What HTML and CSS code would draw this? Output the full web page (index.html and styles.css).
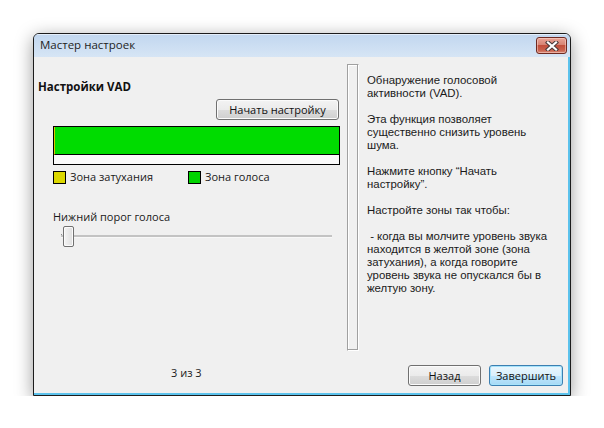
FILE: index.html
```html
<!DOCTYPE html>
<html lang="ru">
<head>
<meta charset="utf-8">
<title>Мастер настроек</title>
<link rel="stylesheet" href="styles.css">
</head>
<body>
<div class="desktop">
  <div class="window">
    <div class="titlebar">
      <span class="title">Мастер настроек</span>
      <button class="close" aria-label="Закрыть">
        <svg width="14" height="10" viewBox="0 0 14 10">
          <path d="M3 1.5 L11 8.5 M11 1.5 L3 8.5" stroke="#4a3a3a" stroke-width="4.2" stroke-linecap="square"/>
          <path d="M3 1.5 L11 8.5 M11 1.5 L3 8.5" stroke="#ffffff" stroke-width="2.2" stroke-linecap="square"/>
        </svg>
      </button>
    </div>
    <div class="client">
      <div class="main">
        <div class="left">
          <h1 class="heading">Настройки VAD</h1>
          <div class="btn-row">
            <button class="btn btn-start">Начать настройку</button>
          </div>
          <div class="meter">
            <div class="meter-level"></div>
            <div class="meter-bottom"></div>
          </div>
          <div class="legend">
            <div class="legend-item legend-first"><span class="swatch swatch-yellow"></span>Зона затухания</div>
            <div class="legend-item"><span class="swatch swatch-green"></span>Зона голоса</div>
          </div>
          <div class="slider-label">Нижний порог голоса</div>
          <div class="slider">
            <div class="tick"></div>
            <div class="track"></div>
            <div class="thumb"></div>
          </div>
        </div>
        <div class="separator"></div>
        <div class="help">
          <p>Обнаружение голосовой<br>активности (VAD).</p>
          <p>Эта функция позволяет<br>существенно снизить уровень<br>шума.</p>
          <p>Нажмите кнопку “Начать<br>настройку”.</p>
          <p>Настройте зоны так чтобы:</p>
          <p>&nbsp;- когда вы молчите уровень звука<br>находится в желтой зоне (зона<br>затухания), а когда говорите<br>уровень звука не опускался бы в<br>желтую зону.</p>
        </div>
      </div>
      <div class="footer">
        <span class="pages">3 из 3</span>
        <div class="footer-buttons">
          <button class="btn btn-back">Назад</button>
          <button class="btn btn-default">Завершить</button>
        </div>
      </div>
    </div>
  </div>
</div>
</body>
</html>
```
FILE: styles.css
```css
html, body {
  margin: 0;
  padding: 0;
  background: #ffffff;
}
body {
  font-family: "Open Sans", "Noto Sans", sans-serif;
  font-size: 11px;
  color: #1a1a1a;
}
.desktop {
  padding: 33px 0 0 33px;
}
.window {
  box-sizing: border-box;
  width: 538px;
  height: 363px;
  border: 1px solid #1c1c1c;
  border-radius: 6px 6px 0 0;
  background: #bcd3ee;
  box-shadow: 0 4px 18px rgba(0, 0, 0, 0.4);
  display: flex;
  flex-direction: column;
  overflow: hidden;
}
.titlebar {
  height: 23px;
  flex: none;
  display: flex;
  align-items: flex-start;
  justify-content: space-between;
  background: linear-gradient(#c2d7ef, #d6e5f5);
  border-top: 1px solid #e4eefa;
  box-sizing: border-box;
}
.title {
  font-size: 11.5px;
  line-height: 20px;
  padding-left: 6px;
  color: #1e1e1e;
}
.close {
  box-sizing: border-box;
  width: 31px;
  height: 17px;
  margin: 2px 3px 0 0;
  padding: 0;
  border: 1px solid #6e2a22;
  border-radius: 3px;
  background: linear-gradient(#e9a497 0%, #d78474 45%, #c24f3c 50%, #c9604c 80%, #d88a78 100%);
  box-shadow: inset 0 0 0 1px rgba(255, 220, 210, 0.5);
  display: flex;
  align-items: center;
  justify-content: center;
}
.client {
  flex: 1;
  background: #f0f0f0;
  border-right: 2px solid #5cc2ec;
  border-bottom: 2px solid #5cc2ec;
  display: flex;
  flex-direction: column;
}
.main {
  height: 294px;
  display: flex;
  flex: none;
}
.left {
  box-sizing: border-box;
  width: 313px;
  padding: 22px 7px 0 4px;
}
.heading {
  margin: 0;
  font-size: 11.5px;
  font-weight: bold;
  line-height: 15px;
  color: #111;
}
.btn-row {
  display: flex;
  justify-content: flex-end;
  margin-top: 5px;
}
.btn {
  box-sizing: border-box;
  height: 21px;
  padding: 0;
  font-family: "Open Sans", "Noto Sans", sans-serif;
  font-size: 11px;
  color: #111;
  border: 1px solid #707070;
  border-radius: 3px;
  background: linear-gradient(#f3f3f3 0%, #ebebeb 50%, #dddddd 51%, #cfcfcf 100%);
  box-shadow: inset 0 0 0 1px #fbfbfb;
}
.btn-start {
  width: 123px;
  margin-right: 1px;
}
.meter {
  box-sizing: border-box;
  margin: 6px 0 0 15px;
  height: 39px;
  border: 1px solid #000;
  background: #fafafa;
}
.meter-level {
  height: 27px;
  background: #00dc00;
  border-left: 1px solid #d8c800;
  border-bottom: 1px solid #000;
}
.legend {
  display: flex;
  margin: 5px 0 0 15px;
  line-height: 14px;
}
.legend-item {
  display: flex;
  align-items: center;
}
.legend-first {
  width: 135px;
}
.swatch {
  box-sizing: border-box;
  width: 13px;
  height: 13px;
  border: 1px solid #000;
  margin-right: 4px;
}
.swatch-yellow {
  background: #dcd800;
}
.swatch-green {
  background: #00d400;
}
.slider-label {
  margin: 25px 0 0 15px;
  line-height: 15px;
}
.slider {
  position: relative;
  margin: 2px 0 0 23px;
  width: 271px;
  height: 21px;
}
.track {
  position: absolute;
  left: 0;
  right: 0;
  top: 9px;
  height: 2px;
  background: #c3c3c3;
  border-bottom: 1px solid #f8f8f8;
}
.tick {
  position: absolute;
  left: 0;
  top: 8px;
  width: 1px;
  height: 4px;
  background: #8a8a8a;
}
.thumb {
  position: absolute;
  left: 2px;
  top: 0;
  box-sizing: border-box;
  width: 11px;
  height: 21px;
  border: 1px solid #707070;
  border-radius: 2px;
  background: linear-gradient(90deg, #f4f4f4, #dedede);
  box-shadow: inset 0 0 0 1px #fbfbfb;
}
.separator {
  box-sizing: border-box;
  width: 12px;
  margin-top: 7px;
  height: 287px;
  border-left: 1px solid #a0a0a0;
  border-top: 1px solid #a0a0a0;
  border-right: 1px solid #ffffff;
  border-bottom: 1px solid #ffffff;
  box-shadow: inset -1px -1px 0 #a0a0a0, inset 1px 1px 0 #ffffff;
}
.help {
  padding: 17px 0 0 8px;
  font-family: "Liberation Sans", Arial, sans-serif;
  font-size: 11.4px;
  line-height: 13px;
  color: #1a1a1a;
}
.help p {
  margin: 0 0 13px;
  white-space: nowrap;
}
.footer {
  flex: 1;
  display: flex;
  align-items: flex-start;
  padding: 14px 5px 0 137px;
}
.pages {
  line-height: 16px;
}
.footer-buttons {
  margin-left: auto;
  display: flex;
  gap: 8px;
}
.btn-back {
  width: 73px;
}
.btn-default {
  width: 74px;
  border-color: #3c7fb1;
  background: linear-gradient(#eaf6fd 0%, #d9f0fc 50%, #bee6fd 51%, #a7d9f5 100%);
  box-shadow: inset 0 0 0 1px #a6e3fb;
}
```
